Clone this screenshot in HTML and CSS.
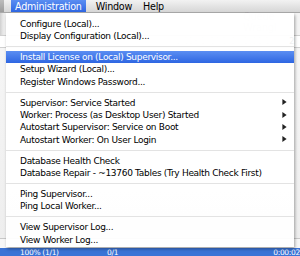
FILE: index.html
```html
<!DOCTYPE html>
<html lang="en">
<head>
    <meta charset="UTF-8">
    <title>Administration Menu</title>
    <link rel="stylesheet" href="styles.css">
</head>
<body>
    <div class="menubar">
        <span class="menubar-edge"></span>
        <span class="menubar-item active">Administration</span>
        <span class="menubar-item">Window</span>
        <span class="menubar-item">Help</span>
    </div>

    <div class="app">
        <div class="app-toolbar"><span class="ghost">Queue Wrangl</span></div>
        <div class="app-queue"><span class="ghost">Q-118 1619 1620 1621 16</span><span class="edge-text">2</span></div>
        <div class="app-body"></div>
        <div class="app-header"></div>
        <div class="app-selected">
            <span class="cell-progress">100% (1/1)</span>
            <span class="cell-count">0/1</span>
            <span class="cell-time">0:00:02</span>
        </div>
    </div>

    <!-- the open Administration menu sits over the app window -->
    <div class="menu">
        <div class="menu-item">Configure (Local)...</div>
        <div class="menu-item">Display Configuration (Local)...</div>
        <div class="menu-sep"></div>
        <div class="menu-item selected">Install License on (Local) Supervisor...</div>
        <div class="menu-item">Setup Wizard (Local)...</div>
        <div class="menu-item">Register Windows Password...</div>
        <div class="menu-sep"></div>
        <div class="menu-item has-sub">Supervisor: Service Started<svg class="arrow" viewBox="0 0 5 7"><polygon points="0,0 5,3.5 0,7"/></svg></div>
        <div class="menu-item has-sub">Worker: Process (as Desktop User) Started<svg class="arrow" viewBox="0 0 5 7"><polygon points="0,0 5,3.5 0,7"/></svg></div>
        <div class="menu-item has-sub">Autostart Supervisor: Service on Boot<svg class="arrow" viewBox="0 0 5 7"><polygon points="0,0 5,3.5 0,7"/></svg></div>
        <div class="menu-item has-sub">Autostart Worker: On User Login<svg class="arrow" viewBox="0 0 5 7"><polygon points="0,0 5,3.5 0,7"/></svg></div>
        <div class="menu-sep"></div>
        <div class="menu-item">Database Health Check</div>
        <div class="menu-item">Database Repair - ~13760 Tables (Try Health Check First)</div>
        <div class="menu-sep"></div>
        <div class="menu-item">Ping Supervisor...</div>
        <div class="menu-item">Ping Local Worker...</div>
        <div class="menu-sep"></div>
        <div class="menu-item">View Supervisor Log...</div>
        <div class="menu-item">View Worker Log...</div>
    </div>
</body>
</html>
```

FILE: styles.css
```css
:root {
    --menu-font: 'DejaVu Sans', sans-serif;
    --select-top: #5b8ef2;
    --select-bottom: #2e66e2;
    --sep-color: #e3e3e3;
}

body {
    margin: 0;
    width: 300px;
    height: 256px;
    overflow: hidden;
    position: relative;
    font-family: var(--menu-font);
    font-size: 9px;
    letter-spacing: -0.3px;
    color: #000;
    background-color: #e9e9e9;
}

.menubar {
    height: 13px;
    display: flex;
    align-items: stretch;
    background: linear-gradient(#f2f2f2, #d6d6d6);
    border-bottom: 1px solid #a9a9a9;
    box-sizing: border-box;
}

.menubar-edge {
    width: 4px;
    background: linear-gradient(#bdbdbd, #9c9c9c);
    margin-right: 7px;
}

.menubar-item {
    display: flex;
    align-items: center;
    padding: 0 4px;
    margin-right: 3px;
    font-size: 9.6px;
    letter-spacing: -0.25px;
}

.menubar-item.active {
    margin-right: 6px;
    color: #fff;
    background: linear-gradient(var(--select-top), var(--select-bottom));
}

/* background app window, mostly hidden by the menu */
.app {
    height: 243px;
    display: flex;
    flex-direction: column;
    background: linear-gradient(90deg, #cfcfcf 0, #e8e8e8 3px, #f4f4f4 6px);
}

.ghost {
    color: rgba(0, 0, 0, 0.07);
}

.app-toolbar {
    height: 17px;
    padding-left: 243px;
    display: flex;
    align-items: center;
    font-size: 10px;
}

.app-queue {
    height: 11px;
    margin-top: 5px;
    padding-left: 175px;
    display: flex;
    align-items: center;
    font-size: 8px;
    border-top: 1px solid #d0d0d0;
    border-bottom: 1px solid #d0d0d0;
    background-color: #fff;
}

.edge-text {
    margin-left: 15px;
    color: #000;
}

.app-body {
    flex: 1;
    background: linear-gradient(#f6f6f6, #eeeeee);
}

.app-header {
    height: 9px;
    background-color: #f7f7f7;
    border-top: 1px solid #c8c8c8;
}

.app-selected {
    height: 8px;
    display: flex;
    align-items: flex-start;
    color: #fff;
    font-size: 7.5px;
    line-height: 10px;
    background-color: #3a73d6;
}

.cell-progress {
    width: 93px;
    padding-left: 20px;
}

.cell-count {
    width: 150px;
}

.cell-time {
    padding-left: 26px;
}

.menu {
    position: absolute;
    top: 13px;
    left: 6px;
    width: 288px;
    padding: 4.5px 0 1px;
    background-color: rgba(255, 255, 255, 0.94);
    box-shadow: 1px 2px 3px rgba(0, 0, 0, 0.35);
}

.menu-item {
    height: 12.33px;
    padding-left: 14px;
    display: flex;
    align-items: center;
    white-space: nowrap;
    position: relative;
}

.menu-item.selected {
    color: #fff;
    background: linear-gradient(var(--select-top), var(--select-bottom));
}

.arrow {
    position: absolute;
    right: 7px;
    top: 3px;
    width: 5px;
    height: 6px;
    fill: #222;
}

.menu-sep {
    height: 8.67px;
    display: flex;
    align-items: center;
}

.menu-sep::before {
    content: '';
    flex: 1;
    height: 1px;
    background-color: var(--sep-color);
}
```
